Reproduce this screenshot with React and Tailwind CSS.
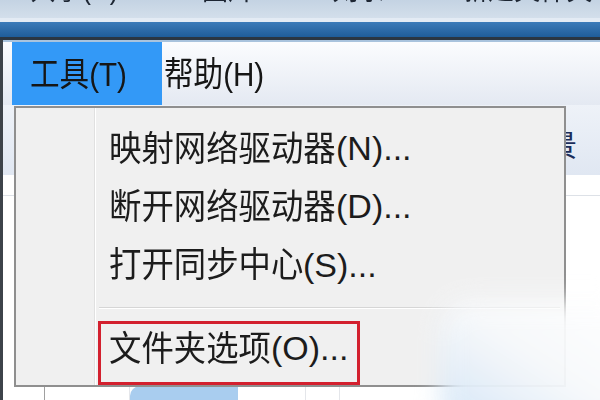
import React from "react";

const font = "font-['Liberation_Sans','Noto_Sans_CJK_SC',sans-serif]";

// squeezed text, the screenshot is horizontally compressed
const Label = ({ children, className = "" }) => (
  <span className={`inline-block origin-left scale-x-[0.87] whitespace-nowrap leading-none ${className}`}>
    {children}
  </span>
);

// cjk part slightly squeezed, latin part at normal width
const ItemText = ({ cjk, latin, w }) => (
  <span className="flex items-center whitespace-nowrap leading-none">
    <span className={`inline-block origin-left scale-x-[0.925] text-[35px] ${w}`}>{cjk}</span>
    <span className="text-[34px]">{latin}</span>
  </span>
);

const MenuItem = ({ cjk, latin, w }) => (
  <div className="h-[59px] flex items-center pl-[14px] text-[#1c1c1c]">
    <ItemText cjk={cjk} latin={latin} w={w} />
  </div>
);

export default function App() {
  return (
    <div className={`relative w-[600px] h-[400px] overflow-hidden bg-white flex flex-col ${font}`}>
      {/* window toolbar (cut off at the top) */}
      <div className="h-[18px] bg-gradient-to-b from-[#c4d3e3] to-[#d3dfeb] overflow-hidden">
        <div className="-mt-[26px] pl-[30px] flex gap-[70px] text-[30px] text-[#1d2633]">
          <Label>共享(H)</Label>
          <Label>图片</Label>
          <Label>刻录</Label>
          <Label>新建文件夹</Label>
        </div>
      </div>
      <div className="h-[4px] bg-[#e3ebf4]" />
      <div className="h-[15px] bg-gradient-to-b from-[#3b7bb9] to-[#1f5d99]" />
      <div className="h-[3px] bg-[#2a3642]" />
      <div className="flex-1 flex flex-col border-l-[3px] border-[#3d434a]">
        <div className="h-[2px] bg-[#a9c3dd]" />

        {/* menu bar */}
        <div className="h-[63px] flex pl-[9px] bg-gradient-to-b from-[#fbfcfe] to-[#e4e9f2] text-[34px] text-[#161616]">
          <div className="w-[150px] bg-[#3399f7] flex items-center pl-[18px]">
            <Label>工具(T)</Label>
          </div>
          <div className="flex items-center pl-[2px]">
            <Label>帮助(H)</Label>
          </div>
        </div>

        {/* content behind the dropdown */}
        <div className="h-[70px] flex justify-end items-center pr-[23px] pt-[12px] bg-gradient-to-b from-[#eef2f8] to-[#e0e7f2] text-[30px] text-[#1b2d5a]">
          <span className="leading-none">背景</span>
        </div>
        <div className="h-[21px] border-b border-[#dde1e7]" />
        <div className="flex-1 flex">
          <div className="w-[42px] border-r border-[#a0a0a0]" />
          <div className="w-[85px] border-r border-[#e4e6ea]" />
          <div className="w-[108px] flex flex-col justify-end">
            <div className="h-[14px] rounded-tl-[10px] bg-[#a9cdef]" />
          </div>
          <div className="w-[68px] border-r border-[#e4e6ea]" />
          <div className="w-[34px] border-r border-[#e4e6ea]" />
        </div>
      </div>

      {/* dropdown menu */}
      <div className="absolute left-[14px] top-[106px] w-[552px] h-[281px] border-2 border-[#8f8f8f] bg-[#f0f0f0] flex">
        <div className="w-[79px] border-r border-[#e0e0e0] shadow-[1px_0_0_#ffffff]" />
        <div className="flex-1 flex flex-col pt-[11px]">
          <MenuItem cjk="映射网络驱动器" latin="(N)..." w="w-[227px]" />
          <MenuItem cjk="断开网络驱动器" latin="(D)..." w="w-[227px]" />
          <MenuItem cjk="打开同步中心" latin="(S)..." w="w-[194px]" />
          <div className="h-[27px] pt-[13px] pl-[4px] pr-[4px]">
            <div className="h-px bg-[#d6d6d6] shadow-[0_1px_0_#ffffff]" />
          </div>
          <div className="ml-[3px] w-[262px] h-[65px] border-[3px] border-[#d3202e] flex items-start pt-[7px] pl-[8px] text-[#1c1c1c]">
            <ItemText cjk="文件夹选项" latin="(O)..." w="w-[162px]" />
          </div>
        </div>
      </div>

      {/* faded watermark, bottom right */}
      <div className="absolute left-[440px] top-[300px] w-[200px] h-[130px] rounded-[30px] bg-gradient-to-tr from-[#cfe3f6] via-[#f7f9fb] to-white blur-md opacity-95" />
    </div>
  );
}
